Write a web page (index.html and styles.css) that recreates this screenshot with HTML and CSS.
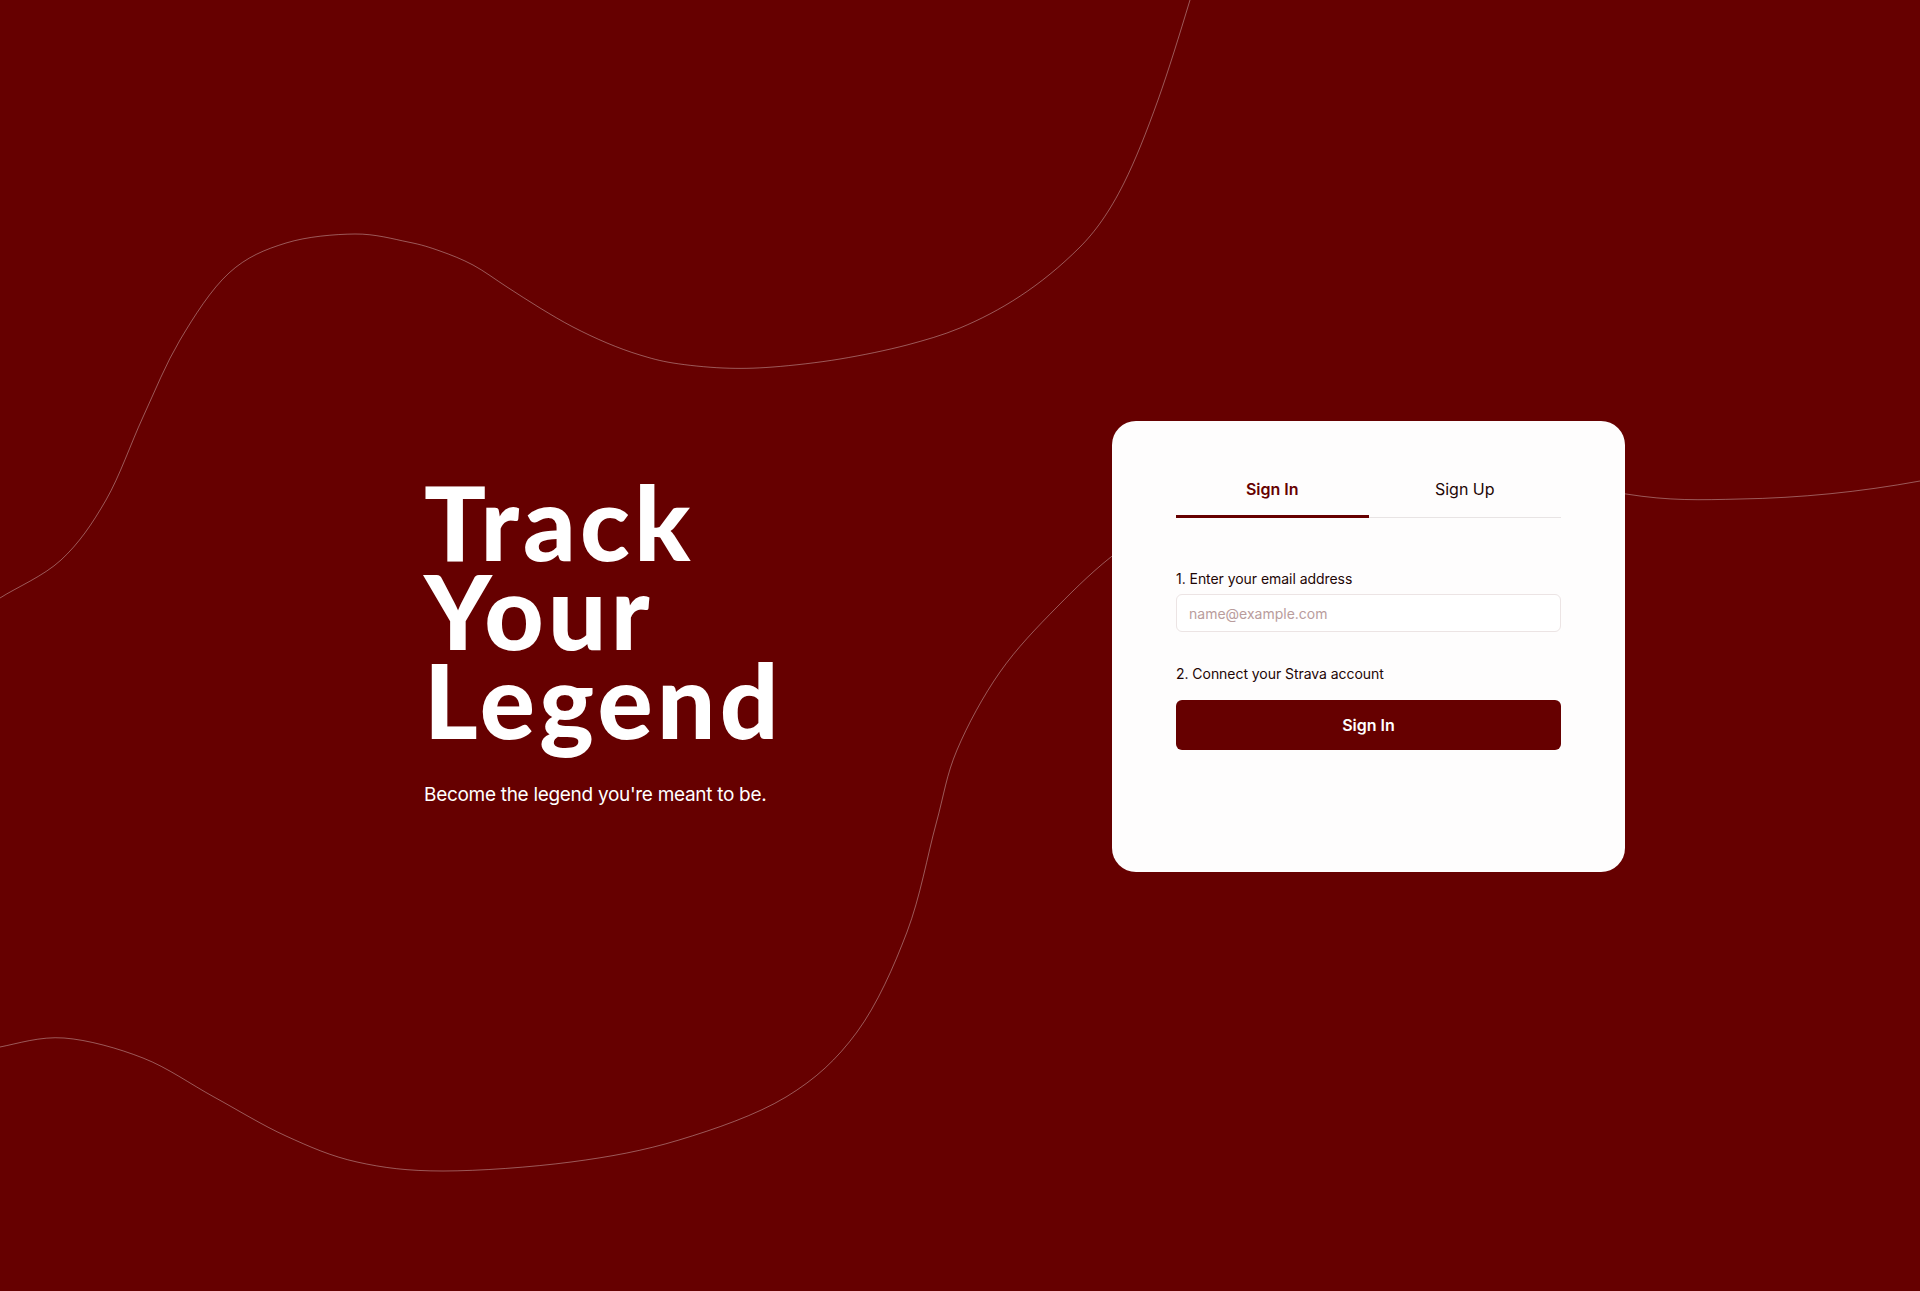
FILE: index.html
```html
<!DOCTYPE html>
<html lang="en">
<head>
<meta charset="utf-8">
<title>Track Your Legend</title>
<link rel="stylesheet" href="styles.css">
</head>
<body>
<div class="page">
  <svg class="waves" width="1920" height="1291" viewBox="0 0 1920 1291" aria-hidden="true">
    <path d="M0,598 C16.8,587.2 43.3,576.3 61,560 C78.7,543.7 92.3,523.8 106,500 C119.7,476.2 130.7,443.7 143,417 C155.3,390.3 165.7,364 180,340 C194.3,316 211.3,289.2 229,273 C246.7,256.8 265,249.5 286,243 C307,236.5 334.7,234.2 355,234 C375.3,233.8 393.8,239.2 408,242 C422.2,244.8 429.2,247.2 440,251 C450.8,254.8 461.8,259 473,265 C484.2,271 495.8,279.8 507,287 C518.2,294.2 529,301.3 540,308 C551,314.7 561.8,321.2 573,327 C584.2,332.8 595.8,338.3 607,343 C618.2,347.7 629,351.7 640,355 C651,358.3 659.2,360.8 673,363 C686.8,365.2 706.3,367.3 723,368 C739.7,368.7 753.5,368.5 773,367 C792.5,365.5 817.7,362.7 840,359 C862.3,355.3 887,350.2 907,345 C924.7,340.2 942.3,335.4 960,328 C1000,311.2 1040,287 1080,247 C1094.7,232.3 1109.3,212.4 1124,183 C1135.3,160.4 1146.7,131.6 1158,100 C1168.7,70 1179.3,35.3 1190,0"/>
    <path d="M0,1047 C17.3,1043.7 40.2,1036.2 64,1038 C87.8,1039.8 118,1048.2 143,1058 C168,1067.8 190.2,1084 214,1097 C237.8,1110 262.2,1125.2 286,1136 C309.8,1146.8 330.8,1156.2 357,1162 C383.2,1167.8 407.3,1171 443,1171 C478.7,1171 531.7,1167.2 571,1162 C610.3,1156.8 643.2,1150.8 679,1140 C714.8,1129.2 756.3,1115 786,1097 C815.7,1079 836.8,1059.5 857,1032 C877.2,1004.5 893.8,966.7 907,932 C920.2,897.3 927.7,854.3 936,824 C944.3,793.7 946.3,775.3 957,750 C967.7,724.7 983.3,695.8 1000,672 C1016.7,648.2 1037,627.3 1057,607 C1077,586.7 1096.2,567.8 1120,550 C1143.8,532.2 1300,440 1626,494 C1670,501 1700,500 1740,499 C1800,498 1860,492 1920,481"/>
  </svg>

  <main class="hero">
    <section class="intro">
      <h1 class="headline">Track<br>Your<br>Legend</h1>
      <p class="tagline">Become the legend you're meant to be.</p>
    </section>

    <section class="card">
      <nav class="tabs">
        <button class="tab tab-active" type="button">Sign In</button>
        <button class="tab" type="button">Sign Up</button>
      </nav>
      <form class="form">
        <label class="label label-email" for="email">1. Enter your email address</label>
        <input class="input" id="email" type="email" placeholder="name@example.com">
        <p class="label label-strava">2. Connect your Strava account</p>
        <button class="submit" type="button">Sign In</button>
      </form>
    </section>
  </main>
</div>
</body>
</html>
```

FILE: styles.css
```css
* {
  box-sizing: border-box;
}

html, body {
  margin: 0;
  padding: 0;
}

body {
  background: #660000;
  font-family: "Inter", "Liberation Sans", sans-serif;
  color: #ffffff;
  overflow: hidden;
}

.page {
  position: relative;
  width: 100%;
  min-height: 100vh;
}

.waves {
  position: absolute;
  top: 0;
  left: 0;
  z-index: 0;
}

.waves path {
  fill: none;
  stroke: rgba(255, 255, 255, 0.35);
  stroke-width: 1;
}

.hero {
  position: relative;
  z-index: 1;
  display: flex;
  align-items: center;
  justify-content: space-between;
  min-height: 100vh;
  padding: 2px 295px 0 424px;
}

.intro {
  display: flex;
  flex-direction: column;
  padding-bottom: 8px;
}

.headline {
  margin: 0;
  font-family: "Lato", "Inter", sans-serif;
  font-weight: 900;
  font-size: 103px;
  line-height: 89px;
  letter-spacing: 4.3px;
  color: #ffffff;
}

.tagline {
  margin: 37px 0 0 0;
  font-size: 19px;
  line-height: 28px;
  font-weight: 400;
  letter-spacing: -0.3px;
  color: #ffffff;
}

.card {
  width: 513px;
  background: #fefdfd;
  border-radius: 24px;
  padding: 48px 64px 122px;
}

.tabs {
  display: flex;
  border-bottom: 1px solid #e8e4e4;
}

.tab {
  flex: 1;
  background: none;
  border: none;
  border-bottom: 3px solid transparent;
  margin-bottom: -1px;
  padding: 8px 0 14px;
  font-family: "Inter", sans-serif;
  font-size: 16px;
  line-height: 24px;
  font-weight: 400;
  color: #1e0606;
  cursor: pointer;
}

.tab-active {
  color: #660000;
  font-weight: 600;
  border-bottom-color: #660000;
}

.form {
  display: flex;
  flex-direction: column;
  padding-top: 51px;
}

.label {
  margin: 0;
  font-size: 14px;
  line-height: 20px;
  letter-spacing: -0.05px;
  color: #1e0606;
}

.label-email {
  margin-bottom: 5px;
}

.input {
  height: 38px;
  border: 1px solid #ece4e4;
  border-radius: 6px;
  padding: 0 12px;
  font-family: "Inter", sans-serif;
  font-size: 14px;
  color: #1e0606;
  background: #ffffff;
  outline: none;
}

.input::placeholder {
  color: #b99c9c;
}

.label-strava {
  margin-top: 32px;
  margin-bottom: 16px;
}

.submit {
  height: 50px;
  border: none;
  border-radius: 6px;
  background: #660000;
  color: #ffffff;
  font-family: "Inter", sans-serif;
  font-size: 16px;
  font-weight: 600;
  cursor: pointer;
}
```
